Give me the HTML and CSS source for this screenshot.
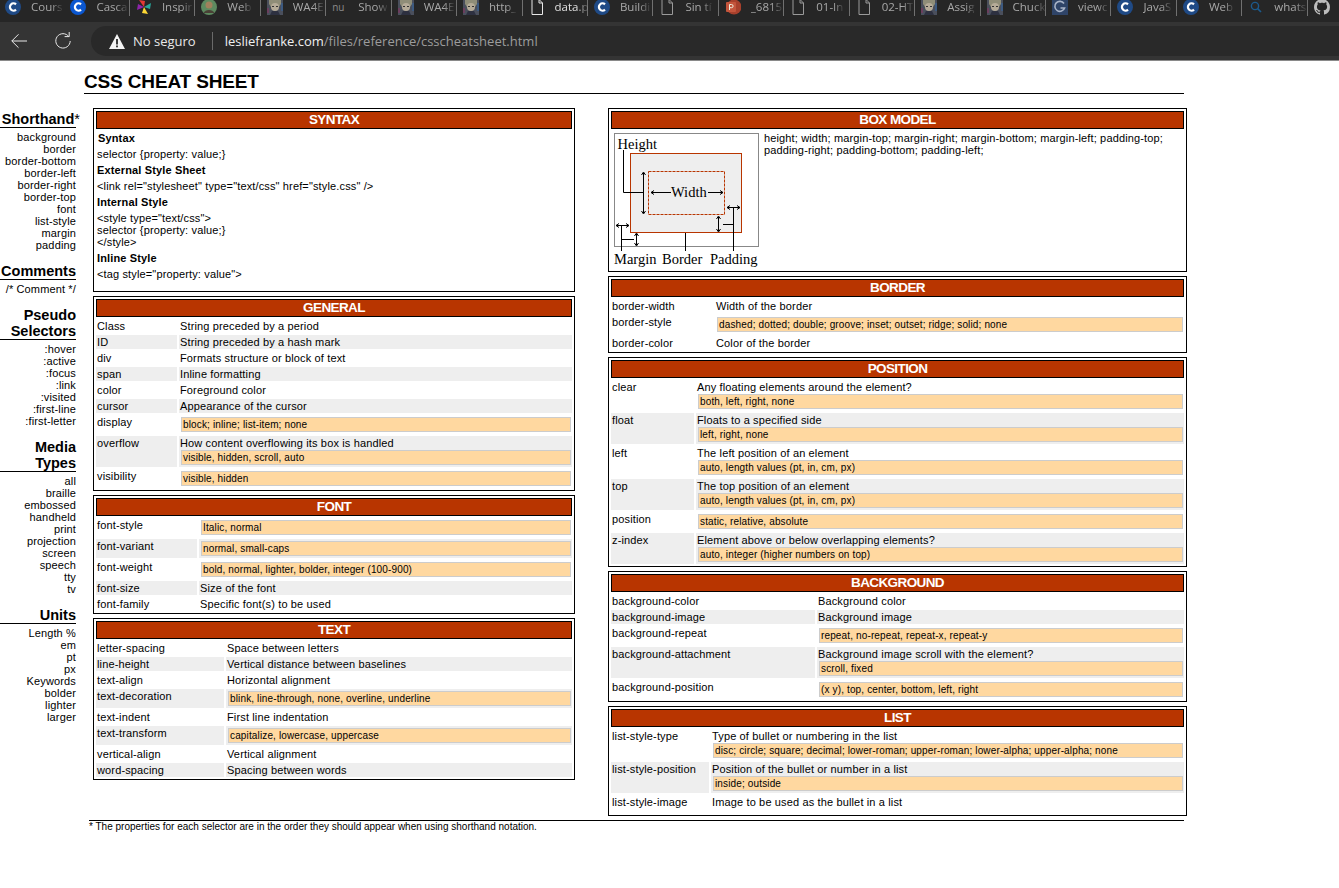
FILE: index.html
```html
<!DOCTYPE html>
<html lang="en">

<head>
    <meta charset="UTF-8">
    <meta name="viewport" content="width=device-width, initial-scale=1.0">
    <title>CSS Cheat Sheet</title>
    <link rel="stylesheet" href="styles.css">
</head>

<body>
    <svg class="defs" width="0" height="0">
        <symbol id="ic-c" viewBox="0 0 16 16">
            <circle cx="8" cy="8" r="8" fill="currentColor" />
            <path d="M11 5.4A3.6 3.6 0 1 0 11 10.6" fill="none" stroke="#fff" stroke-width="2.2" />
        </symbol>
        <symbol id="ic-avatar" viewBox="0 0 16 16">
            <rect width="16" height="16" fill="#4a4f5c" />
            <path d="M2 0h12v5l-2 3H4L2 5z" fill="#8f8d78" />
            <circle cx="8" cy="8" r="4" fill="#b5ab98" />
            <rect x="5" y="7" width="2" height="1" fill="#333" />
            <rect x="9" y="7" width="2" height="1" fill="#333" />
            <path d="M3 16l2-4h6l2 4z" fill="#2d3040" />
            <rect y="9" width="2" height="5" fill="#6a3f5e" />
            <rect x="14" y="4" width="2" height="8" fill="#3d5a80" />
        </symbol>
        <symbol id="ic-doc" viewBox="0 0 16 16">
            <path d="M3 .5h7l3.5 3.5v11.5H3zM10 .5V4h3.5" fill="none" stroke="currentColor" stroke-width="1" />
        </symbol>
    </svg>

    <div class="tabs">
        <div class="tab no-sep"><svg class="fav blue-dim"><use href="#ic-c" /></svg><span>Cours</span></div>
        <div class="tab"><svg class="fav blue"><use href="#ic-c" /></svg><span>Casca</span></div>
        <div class="tab">
            <svg class="fav" viewBox="0 0 16 16">
                <path d="M8 8L3 1l6 1z" fill="#e53935" />
                <path d="M8 8l7-4-1 6z" fill="#26a69a" />
                <path d="M8 8l4 7-6-1z" fill="#fdd835" />
                <path d="M8 8L1 11l1-6z" fill="#8e24aa" />
            </svg><span>Inspir</span>
        </div>
        <div class="tab">
            <svg class="fav" viewBox="0 0 16 16">
                <circle cx="8" cy="8" r="8" fill="#5d8a60" />
                <circle cx="8" cy="6" r="3.5" fill="#a0805c" />
                <path d="M2.5 14a6 5 0 0 1 11 0z" fill="#4a4036" />
            </svg><span>Web</span>
        </div>
        <div class="tab"><svg class="fav"><use href="#ic-avatar" /></svg><span>WA4E</span></div>
        <div class="tab"><span class="fav-text">nu</span><span>Show</span></div>
        <div class="tab"><svg class="fav"><use href="#ic-avatar" /></svg><span>WA4E</span></div>
        <div class="tab"><svg class="fav"><use href="#ic-avatar" /></svg><span>http_</span></div>
        <div class="tab"><svg class="fav doc"><use href="#ic-doc" /></svg><span class="bright">data.p</span></div>
        <div class="tab"><svg class="fav blue-dim"><use href="#ic-c" /></svg><span>Buildi</span></div>
        <div class="tab"><svg class="fav doc-dim"><use href="#ic-doc" /></svg><span>Sin tí</span></div>
        <div class="tab">
            <svg class="fav" viewBox="0 0 16 16">
                <circle cx="9" cy="8" r="7.5" fill="#a8402c" />
                <rect x="1" y="3" width="10" height="10" rx="1" fill="#c4553c" />
                <path d="M4.5 11V5.5h2a1.6 1.6 0 0 1 0 3.2h-2" fill="none" stroke="#eed" stroke-width="1" />
            </svg><span>_6815</span>
        </div>
        <div class="tab"><svg class="fav doc-dim"><use href="#ic-doc" /></svg><span>01-In</span></div>
        <div class="tab"><svg class="fav doc-dim"><use href="#ic-doc" /></svg><span>02-HT</span></div>
        <div class="tab"><svg class="fav"><use href="#ic-avatar" /></svg><span>Assig</span></div>
        <div class="tab"><svg class="fav"><use href="#ic-avatar" /></svg><span>Chuck</span></div>
        <div class="tab">
            <svg class="fav" viewBox="0 0 16 16">
                <rect width="16" height="16" fill="#2f4468" />
                <path d="M12 4.5A5 5 0 1 0 12.6 9H8.5" fill="none" stroke="#a9b4c8" stroke-width="1.6" />
            </svg><span>viewc</span>
        </div>
        <div class="tab"><svg class="fav blue-dim"><use href="#ic-c" /></svg><span>JavaS</span></div>
        <div class="tab"><svg class="fav blue-dim"><use href="#ic-c" /></svg><span>Web</span></div>
        <div class="tab">
            <svg class="fav" viewBox="0 0 16 16">
                <circle cx="7" cy="7" r="3.6" fill="none" stroke="#1c5a8c" stroke-width="1.4" />
                <path d="M9.6 9.6L13 13" stroke="#1c5a8c" stroke-width="1.6" />
            </svg><span>whats</span>
        </div>
        <div class="tab no-sep">
            <svg class="fav" viewBox="0 0 16 16">
                <path fill="#bdbdbd" d="M8 0C3.58 0 0 3.58 0 8c0 3.54 2.29 6.53 5.47 7.59.4.07.55-.17.55-.38 0-.19-.01-.82-.01-1.49-2.01.37-2.53-.49-2.69-.94-.09-.23-.48-.94-.82-1.13-.28-.15-.68-.52-.01-.53.63-.01 1.08.58 1.23.82.72 1.21 1.87.87 2.33.66.07-.52.28-.87.51-1.07-1.78-.2-3.64-.89-3.64-3.95 0-.87.31-1.59.82-2.15-.08-.2-.36-1.02.08-2.12 0 0 .67-.21 2.2.82.64-.18 1.32-.27 2-.27s1.36.09 2 .27c1.53-1.04 2.2-.82 2.2-.82.44 1.1.16 1.92.08 2.12.51.56.82 1.27.82 2.15 0 3.07-1.87 3.75-3.65 3.95.29.25.54.73.54 1.48 0 1.07-.01 1.93-.01 2.2 0 .21.15.46.55.38A8.013 8.013 0 0016 8c0-4.42-3.58-8-8-8z" />
            </svg>
        </div>
    </div>

    <div class="toolbar">
        <svg class="tool-icon" viewBox="0 0 16 16">
            <path d="M16 8H.8M7.5 1.3L.8 8l6.7 6.7" fill="none" stroke="#e8e8e8" stroke-width="1" />
        </svg>
        <svg class="tool-icon reload" viewBox="0 0 16 16">
            <path d="M13.8 3.6A7.2 7.2 0 1 0 15.2 8" fill="none" stroke="#e8e8e8" stroke-width="1" />
            <path d="M9.6 3.6h4.6V-1" fill="none" stroke="#e8e8e8" stroke-width="1" />
        </svg>
        <div class="address">
            <svg class="warn" viewBox="0 0 16 15">
                <path d="M8 0l8 15H0z" fill="#f4f4f4" />
                <rect x="7.1" y="5" width="1.8" height="5.5" fill="#292929" />
                <rect x="7.1" y="11.5" width="1.8" height="1.8" fill="#292929" />
            </svg>
            <span class="insecure">No seguro</span>
            <span class="url"><b>lesliefranke.com</b>/files/reference/csscheatsheet.html</span>
        </div>
    </div>

    <h1>CSS CHEAT SHEET</h1>

    <div class="sheet">
        <div class="sidebar">
            <h3>Shorthand<span class="star">*</span></h3>
            <ul>
                <li>background</li>
                <li>border</li>
                <li>border-bottom</li>
                <li>border-left</li>
                <li>border-right</li>
                <li>border-top</li>
                <li>font</li>
                <li>list-style</li>
                <li>margin</li>
                <li>padding</li>
            </ul>
            <h3>Comments</h3>
            <ul>
                <li>/* Comment */</li>
            </ul>
            <h3>Pseudo<br>Selectors</h3>
            <ul>
                <li>:hover</li>
                <li>:active</li>
                <li>:focus</li>
                <li>:link</li>
                <li>:visited</li>
                <li>:first-line</li>
                <li>:first-letter</li>
            </ul>
            <h3>Media<br>Types</h3>
            <ul>
                <li>all</li>
                <li>braille</li>
                <li>embossed</li>
                <li>handheld</li>
                <li>print</li>
                <li>projection</li>
                <li>screen</li>
                <li>speech</li>
                <li>tty</li>
                <li>tv</li>
            </ul>
            <h3>Units</h3>
            <ul>
                <li>Length %</li>
                <li>em</li>
                <li>pt</li>
                <li>px</li>
                <li>Keywords</li>
                <li>bolder</li>
                <li>lighter</li>
                <li>larger</li>
            </ul>
        </div>

        <div class="col col-left">
            <div class="box">
                <h2>SYNTAX</h2>
                <div class="syntax">
                    <p class="head first">Syntax</p>
                    <p>selector {property: value;}</p>
                    <p class="head">External Style Sheet</p>
                    <p>&lt;link rel="stylesheet" type="text/css" href="style.css" /&gt;</p>
                    <p class="head">Internal Style</p>
                    <p>&lt;style type="text/css"&gt;<br>selector {property: value;}<br>&lt;/style&gt;</p>
                    <p class="head">Inline Style</p>
                    <p>&lt;tag style="property: value"&gt;</p>
                </div>
            </div>

            <div class="box">
                <h2>GENERAL</h2>
                <table>
                    <col class="w-general">
                    <tr><td>Class</td><td>String preceded by a period</td></tr>
                    <tr class="alt"><td>ID</td><td>String preceded by a hash mark</td></tr>
                    <tr><td>div</td><td>Formats structure or block of text</td></tr>
                    <tr class="alt"><td>span</td><td>Inline formatting</td></tr>
                    <tr><td>color</td><td>Foreground color</td></tr>
                    <tr class="alt"><td>cursor</td><td>Appearance of the cursor</td></tr>
                    <tr><td>display</td><td><div class="opt">block; inline; list-item; none</div></td></tr>
                    <tr class="alt"><td>overflow</td><td>How content overflowing its box is handled<div class="opt">visible, hidden, scroll, auto</div></td></tr>
                    <tr><td>visibility</td><td><div class="opt">visible, hidden</div></td></tr>
                </table>
            </div>

            <div class="box">
                <h2>FONT</h2>
                <table>
                    <col class="w-font">
                    <tr><td>font-style</td><td><div class="opt">Italic, normal</div></td></tr>
                    <tr class="alt"><td>font-variant</td><td><div class="opt">normal, small-caps</div></td></tr>
                    <tr><td>font-weight</td><td><div class="opt">bold, normal, lighter, bolder, integer (100-900)</div></td></tr>
                    <tr class="alt"><td>font-size</td><td>Size of the font</td></tr>
                    <tr><td>font-family</td><td>Specific font(s) to be used</td></tr>
                </table>
            </div>

            <div class="box">
                <h2>TEXT</h2>
                <table>
                    <col class="w-text">
                    <tr><td>letter-spacing</td><td>Space between letters</td></tr>
                    <tr class="alt"><td>line-height</td><td>Vertical distance between baselines</td></tr>
                    <tr><td>text-align</td><td>Horizontal alignment</td></tr>
                    <tr class="alt"><td>text-decoration</td><td><div class="opt">blink, line-through, none, overline, underline</div></td></tr>
                    <tr><td>text-indent</td><td>First line indentation</td></tr>
                    <tr class="alt"><td>text-transform</td><td><div class="opt">capitalize, lowercase, uppercase</div></td></tr>
                    <tr><td>vertical-align</td><td>Vertical alignment</td></tr>
                    <tr class="alt"><td>word-spacing</td><td>Spacing between words</td></tr>
                </table>
            </div>
        </div>

        <div class="col col-right">
            <div class="box">
                <h2>BOX MODEL</h2>
                <div class="boxmodel">
                    <svg class="diagram" viewBox="13 28 148 136">
                        <rect x="14.5" y="28.5" width="144" height="113" fill="#fff" stroke="#888" />
                        <rect x="30.5" y="48.5" width="111" height="79" fill="#eee" stroke="#b83500" />
                        <rect x="48.5" y="66.5" width="76" height="43" fill="#eee" stroke="#b83500" stroke-dasharray="3 1" />
                        <g fill="none" stroke="#000">
                            <path d="M23.5 45v42.5H43" />
                            <path d="M43.5 68v40M41.5 70l2-3 2 3M41.5 106l2 3 2-3" />
                            <path d="M51 87.5h20M108 87.5h15M54 85.5l-3 2 3 2M120 85.5l3 2-3 2" />
                            <path d="M127 102.5h13M130 100.5l-3 2 3 2M137 100.5l3 2-3 2M133.5 102.5V146M123 119.5h10" />
                            <path d="M118.5 112v14M116.5 114l2-3 2 3M116.5 124l2 3 2-3" />
                            <path d="M16 120.5h13M19 118.5l-3 2 3 2M26 118.5l3 2-3 2M21.5 120.5V146M21.5 134.5H34" />
                            <path d="M36.5 129v11M34.5 131l2-3 2 3M34.5 138l2 3 2-3" />
                            <path d="M85.5 128v18" />
                        </g>
                        <text x="17.5" y="44">Height</text>
                        <text x="71" y="92">Width</text>
                        <text x="14" y="159">Margin</text>
                        <text x="62" y="159">Border</text>
                        <text x="110" y="159">Padding</text>
                    </svg>
                    <p>height; width; margin-top; margin-right; margin-bottom; margin-left; padding-top; padding-right; padding-bottom; padding-left;</p>
                </div>
            </div>

            <div class="box">
                <h2>BORDER</h2>
                <table>
                    <col class="w-border">
                    <tr><td>border-width</td><td>Width of the border</td></tr>
                    <tr><td>border-style</td><td><div class="opt">dashed; dotted; double; groove; inset; outset; ridge; solid; none</div></td></tr>
                    <tr><td>border-color</td><td>Color of the border</td></tr>
                </table>
            </div>

            <div class="box">
                <h2>POSITION</h2>
                <table>
                    <col class="w-position">
                    <tr><td>clear</td><td>Any floating elements around the element?<div class="opt">both, left, right, none</div></td></tr>
                    <tr class="alt"><td>float</td><td>Floats to a specified side<div class="opt">left, right, none</div></td></tr>
                    <tr><td>left</td><td>The left position of an element<div class="opt">auto, length values (pt, in, cm, px)</div></td></tr>
                    <tr class="alt"><td>top</td><td>The top position of an element<div class="opt">auto, length values (pt, in, cm, px)</div></td></tr>
                    <tr><td>position</td><td><div class="opt">static, relative, absolute</div></td></tr>
                    <tr class="alt"><td>z-index</td><td>Element above or below overlapping elements?<div class="opt">auto, integer (higher numbers on top)</div></td></tr>
                </table>
            </div>

            <div class="box">
                <h2>BACKGROUND</h2>
                <table>
                    <col class="w-background">
                    <tr><td>background-color</td><td>Background color</td></tr>
                    <tr class="alt"><td>background-image</td><td>Background image</td></tr>
                    <tr><td>background-repeat</td><td><div class="opt">repeat, no-repeat, repeat-x, repeat-y</div></td></tr>
                    <tr class="alt"><td>background-attachment</td><td>Background image scroll with the element?<div class="opt">scroll, fixed</div></td></tr>
                    <tr><td>background-position</td><td><div class="opt">(x y), top, center, bottom, left, right</div></td></tr>
                </table>
            </div>

            <div class="box box-list">
                <h2>LIST</h2>
                <table>
                    <col class="w-list">
                    <tr><td>list-style-type</td><td>Type of bullet or numbering in the list<div class="opt">disc; circle; square; decimal; lower-roman; upper-roman; lower-alpha; upper-alpha; none</div></td></tr>
                    <tr class="alt"><td>list-style-position</td><td>Position of the bullet or number in a list<div class="opt">inside; outside</div></td></tr>
                    <tr><td>list-style-image</td><td>Image to be used as the bullet in a list</td></tr>
                </table>
            </div>
        </div>
    </div>

    <p class="footnote">* The properties for each selector are in the order they should appear when using shorthand notation.</p>
</body>

</html>
```

FILE: styles.css
```css
body {
    margin: 0;
    font-family: "Liberation Sans", Arial, sans-serif;
    font-size: 11px;
    line-height: 12px;
    letter-spacing: 0.14px;
    color: #000;
    background-color: #fff;
}

.defs {
    position: absolute;
}

/* browser chrome */
.tabs {
    display: flex;
    height: 22px;
    margin-left: -1px;
    background-color: #262626;
    overflow: hidden;
    font-family: "Open Sans", sans-serif;
    font-size: 11.5px;
    letter-spacing: 0;
    color: #a8a8a8;
}

.tab {
    flex: 0 0 65.44px;
    min-width: 0;
    box-sizing: border-box;
    display: flex;
    align-items: center;
    gap: 10px;
    height: 16px;
    padding: 0 0 3px 6px;
    border-right: 1px solid #707070;
    white-space: nowrap;
}

.tab.no-sep {
    border-right: none;
}

.tab span {
    -webkit-mask-image: linear-gradient(to right, #000 65%, rgba(0, 0, 0, 0.15));
    mask-image: linear-gradient(to right, #000 65%, rgba(0, 0, 0, 0.15));
}

.tab span.bright {
    color: #e0e0e0;
}

.tab span.fav-text {
    flex: 0 0 16px;
    font-size: 10px;
    color: #8a8a8a;
    -webkit-mask-image: none;
    mask-image: none;
}

.fav {
    flex: 0 0 16px;
    width: 16px;
    height: 16px;
}

.blue {
    color: #0b57d0;
}

.blue-dim {
    color: #1f4a86;
}

.doc {
    color: #e8e8e8;
}

.doc-dim {
    color: #9a9a9a;
}

.toolbar {
    display: flex;
    align-items: center;
    box-sizing: border-box;
    height: 39px;
    padding: 4px 0 4px 11px;
    background-color: #343434;
    border-bottom: 1px solid #8a8a8a;
    letter-spacing: 0;
}

.tool-icon {
    flex: 0 0 16px;
    width: 16px;
    height: 16px;
    overflow: visible;
}

.reload {
    margin-left: 28px;
}

.address {
    flex: 1;
    display: flex;
    align-items: center;
    height: 30px;
    margin-left: 20px;
    padding-left: 18px;
    border-radius: 15px 0 0 15px;
    background-color: #292929;
    font-family: "Open Sans", sans-serif;
    font-size: 13px;
}

.warn {
    width: 16px;
    height: 15px;
}

.insecure {
    margin-left: 8px;
    padding-right: 16px;
    border-right: 1px solid #6a6a6a;
    line-height: 18px;
    color: #e8e8e8;
}

.url {
    margin-left: 12px;
    color: #9c9c9c;
}

.url b {
    font-weight: normal;
    color: #f0f0f0;
}

/* page */
h1 {
    width: 1100px;
    height: 33px;
    box-sizing: border-box;
    margin: 0 0 14px 84px;
    padding-top: 10px;
    font-size: 19px;
    line-height: 22px;
    letter-spacing: -0.15px;
    border-bottom: 1px solid #000;
}

.sheet {
    display: flex;
    align-items: flex-start;
}

.sidebar {
    flex: 0 0 76px;
    margin: 3px 17px 0 0;
    text-align: right;
}

.sidebar h3 {
    margin: 12px 0 3px;
    font-size: 14.5px;
    line-height: 16px;
    letter-spacing: 0;
    white-space: nowrap;
    border-bottom: 1px solid #000;
}

.sidebar h3:first-child {
    margin-top: 0;
}

.star {
    margin-right: -4px;
    font-weight: normal;
}

.sidebar ul {
    list-style: none;
    margin: 0;
    padding: 0;
}

.col {
    display: flex;
    flex-direction: column;
    gap: 4px;
}

.col-left {
    flex: 0 0 482px;
    margin-right: 33px;
}

.col-right {
    flex: 0 0 579px;
}

.box {
    padding-top: 2px;
    border: 1px solid #000;
}

.box-list {
    padding-bottom: 4px;
}

h2 {
    margin: 0 2px;
    padding-bottom: 1px;
    border: 1px solid #000;
    background-color: #b83500;
    color: #fff;
    font-size: 13.5px;
    line-height: 15px;
    letter-spacing: -0.6px;
    font-weight: bold;
    text-align: center;
}

.syntax {
    padding: 1px 3px 9px;
}

.syntax p {
    margin: 0;
    padding: 2px 0;
}

.syntax .head {
    font-weight: bold;
}

.syntax .first {
    padding-left: 1px;
}

.boxmodel {
    display: flex;
    align-items: flex-start;
    gap: 3px;
    padding: 3px 4px 0;
}

.boxmodel p {
    margin: 0;
}

.diagram {
    flex: 0 0 148px;
    width: 148px;
    height: 136px;
    margin: 1px 0 2px;
    font-family: "Liberation Serif", serif;
    font-size: 14.5px;
    letter-spacing: 0;
}

table {
    width: 100%;
    table-layout: fixed;
    border-collapse: separate;
    border-spacing: 2px;
}

td {
    padding: 1px;
    vertical-align: top;
}

tr.alt td {
    background-color: #eee;
}

.opt {
    margin: 1px 0 1px 1px;
    padding: 0 1px;
    border: 1px solid #ccc;
    background-color: #ffd8a0;
    font-size: 10px;
    line-height: 13px;
}

.w-general { width: 81px; }
.w-font { width: 101px; }
.w-text { width: 128px; }
.w-border { width: 102px; }
.w-position { width: 83px; }
.w-background { width: 204px; }
.w-list { width: 98px; }

.footnote {
    width: 1095px;
    margin: 4px 0 0 89px;
    border-top: 1px solid #000;
    font-size: 10px;
    line-height: 12px;
    letter-spacing: 0;
}
```
